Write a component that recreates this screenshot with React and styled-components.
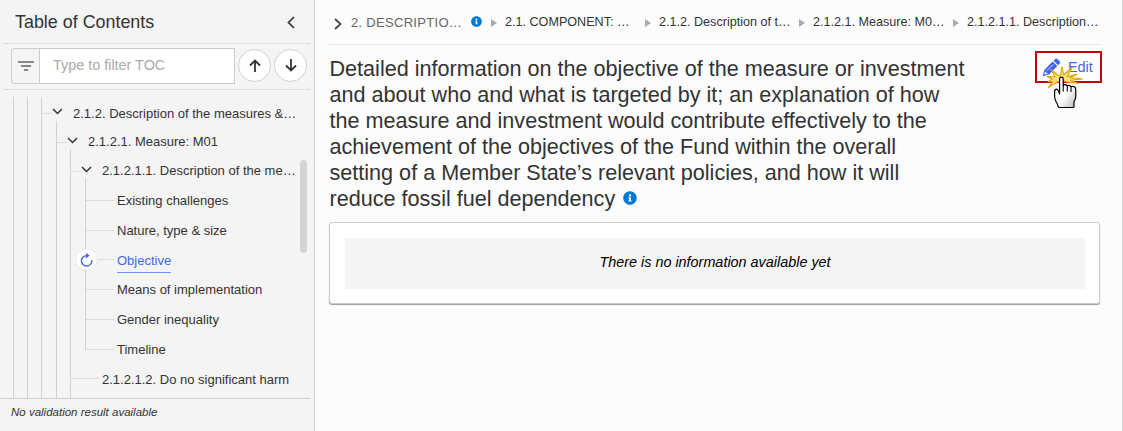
import styled, { createGlobalStyle, css } from "styled-components";
import { FaInfoCircle } from "react-icons/fa";

const branch = [
  { label: "Existing challenges", height: 23 },
  { label: "Nature, type & size", height: 30 },
  { label: "Objective", height: 29, active: true },
  { label: "Means of implementation", height: 30 },
  { label: "Gender inequality", height: 30 },
  { label: "Timeline", height: 30 },
];

const crumbs = [
  "2.1. COMPONENT: …",
  "2.1.2. Description of t…",
  "2.1.2.1. Measure: M0…",
  "2.1.2.1.1. Description…",
];

const titleLines = [
  "Detailed information on the objective of the measure or investment",
  "and about who and what is targeted by it; an explanation of how",
  "the measure and investment would contribute effectively to the",
  "achievement of the objectives of the Fund within the overall",
  "setting of a Member State’s relevant policies, and how it will",
];

function Stroke({ d, w, h, width = 1.7, color = "#333" }) {
  return (
    <svg width={w} height={h} viewBox={`0 0 ${w} ${h}`} fill="none">
      <path d={d} stroke={color} strokeWidth={width} />
    </svg>
  );
}

function FilterIcon() {
  return (
    <svg width="16" height="10" viewBox="0 0 16 10" fill="#888">
      <path d="M0 0h16v2H0zM3 4h10v2H3zM6 8h4v2H6z" />
    </svg>
  );
}

function PencilIcon() {
  return (
    <svg width="19" height="19" viewBox="0 0 19 19">
      <path
        fill="#3f65ee"
        d="M13 1.200q1.300-1.200 2.600 0l2 2q1.200 1.300 0 2.500l-1.500 1.500-4.600-4.500zM10.700 3.500l4.600 4.500-8.300 8.400-6.200 1.900 1.500-6.400z"
      />
      <path
        stroke="#fcfcfc"
        strokeWidth="0.8"
        fill="none"
        d="M4.800 12.800l6.200-6.200"
      />
      <path fill="#fcfcfc" d="M3 13.400l2.700 2.500-2.200.7-1.100-1.100z" />
    </svg>
  );
}

function ClickCursor() {
  return (
    <svg width="44" height="46" viewBox="0 0 44 46">
      <defs>
        <linearGradient id="hand" x1="0" y1="0" x2="1" y2="1">
          <stop offset="0.55" stopColor="#fff" />
          <stop offset="1" stopColor="#b4b4b4" />
        </linearGradient>
      </defs>
      <path
        fill="#ffe07a"
        stroke="#e0a100"
        strokeWidth="1.1"
        strokeLinejoin="round"
        d="M18.500 12.500L20 3.500l1.700 8.500L30.500 4l-5.300 9.500L35 11.200l-7 3.300L40.500 16l-12 1.200 7.500 3-11-1.200-5-1.500-6 2-7.500 5 4-6-4.500.500 4-3L5 13.500l8 .300-4-7 6.500 5z"
      />
      <path
        fill="url(#hand)"
        stroke="#000"
        strokeWidth="1.2"
        strokeLinejoin="round"
        d="M17.600 31V16q0-1.800 1.800-1.800t1.800 1.800v6.500q2-1.700 4 .3 2.300-1.200 3.700.800 4.600-1.300 4.900 3.200v6.500q0 3-1.800 5.500v4.700q0 1-1 1H17.500q-1 0-1.500-1.200-.200-2.300-1.800-4.300-1.600-3-1.600-5.500v-5q0-2.300 2-2.300 1.700.2 3 4.800z"
      />
      <path
        stroke="#000"
        strokeWidth="1.1"
        d="M21.200 22v6.500M25.300 23v5.500M29 24v5"
      />
    </svg>
  );
}

function TreeRow({ label, height, active, open, lift = 0 }) {
  return (
    <Row $height={height}>
      <Connector $width={open ? 10 : 28} />
      {open && (
        <Toggle>
          <Stroke w={11} h={7} d="M1 1l4.500 4.500L10 1" width={1.5} />
        </Toggle>
      )}
      {active && (
        <Refresh>
          <svg width="13" height="14" viewBox="0 0 13 14" fill="none">
            <path
              d="M11.800 7.200A5.200 5.200 0 1 1 6.500 2.600H8M6 .5l2.400 2.100L6 4.800"
              stroke="#4368e6"
              strokeWidth="1.400"
            />
          </svg>
        </Refresh>
      )}
      <Label $active={active} $lift={lift}>
        {label}
      </Label>
    </Row>
  );
}

export default function App() {
  return (
    <Page>
      <GlobalStyle />
      <Sidebar>
        <SideHeader>
          <SideTitle>Table of Contents</SideTitle>
          <Stroke w={8} h={13} d="M7 1L1.500 6.500 7 12" />
        </SideHeader>
        <FilterBar>
          <Addon>
            <FilterIcon />
          </Addon>
          <FilterInput placeholder="Type to filter TOC" />
          <RoundButton>
            <Stroke w={12} h={13} d="M6 13V1.500M1 6.500l5-5 5 5" width={1.8} />
          </RoundButton>
          <RoundButton>
            <Stroke w={12} h={13} d="M6 0v11.500M1 6.500l5 5 5-5" width={1.8} />
          </RoundButton>
        </FilterBar>
        <TreeArea>
          <Group $indent={13}>
            <Group $indent={13}>
              <Group $indent={13}>
                <TreeRow
                  open
                  height={17}
                  label="2.1.2. Description of the measures &…"
                />
                <Group $indent={14} $gap={7}>
                  <TreeRow
                    open
                    height={22}
                    lift={1}
                    label="2.1.2.1. Measure: M01"
                  />
                  <Group $indent={13} $gap={6}>
                    <TreeRow
                      open
                      height={23}
                      lift={1}
                      label="2.1.2.1.1. Description of the me…"
                    />
                    <Group $indent={14} $gap={6} $closed>
                      {branch.map((item) => (
                        <TreeRow key={item.label} {...item} />
                      ))}
                    </Group>
                    <TreeRow
                      height={29}
                      lift={-1}
                      label="2.1.2.1.2. Do no significant harm"
                    />
                  </Group>
                </Group>
              </Group>
            </Group>
          </Group>
          <Thumb />
        </TreeArea>
        <SideFooter>No validation result available</SideFooter>
      </Sidebar>

      <Main>
        <Breadcrumbs>
          <Stroke w={8} h={12} d="M1 1l5.500 5L1 11" color="#444" />
          <FirstCrumb>
            2. DESCRIPTIO…
            <FaInfoCircle size={11} color="#0078d7" />
          </FirstCrumb>
          {crumbs.map((text) => (
            <Crumb key={text}>
              <Triangle />
              {text}
            </Crumb>
          ))}
        </Breadcrumbs>
        <Heading>
          <Title>
            {titleLines.map((line) => (
              <span key={line}>{line}</span>
            ))}
            <span>
              reduce fossil fuel dependency
              <FaInfoCircle size={14} color="#0078d7" />
            </span>
          </Title>
          <EditButton>
            <PencilIcon />
            Edit
            <Pointer>
              <ClickCursor />
            </Pointer>
          </EditButton>
        </Heading>
        <Card>
          <Empty>There is no information available yet</Empty>
        </Card>
      </Main>
    </Page>
  );
}

/* ── styled ── */
const GlobalStyle = createGlobalStyle`
  * {
    box-sizing: border-box;
  }
  body {
    margin: 0;
    font-family: "Liberation Sans", Arial, sans-serif;
    color: #333;
    overflow: hidden;
  }
  svg {
    display: block;
    flex: none;
  }
`;

const Page = styled.div`
  display: flex;
  width: 1123px;
  height: 431px;
  background: #fcfcfc;
`;

const Sidebar = styled.aside`
  display: flex;
  flex-direction: column;
  width: 315px;
  flex: none;
  background: #f4f4f4;
  border-right: 1px solid #d0d0d0;
`;

const dotted = css`
  margin: 0 4px;
  border-bottom: 1px dotted #c8c8c8;
`;

const SideHeader = styled.div`
  ${dotted}
  display: flex;
  align-items: center;
  justify-content: space-between;
  height: 44px;
  padding: 2px 15px 0 11px;
`;

const SideTitle = styled.h2`
  margin: 0;
  padding-bottom: 2px;
  font-size: 17.9px;
  font-weight: 400;
  line-height: 22px;
`;

const FilterBar = styled.div`
  ${dotted}
  display: flex;
  align-items: center;
  height: 46px;
  padding: 0 0 2px 7px;
`;

const Addon = styled.div`
  display: flex;
  align-items: center;
  justify-content: center;
  width: 28px;
  height: 36px;
  border: 1px solid #ccc;
  border-right: 0;
  border-radius: 4px 0 0 4px;
`;

const FilterInput = styled.input`
  width: 196px;
  height: 36px;
  padding: 0 13px 2px;
  border: 1px solid #ccc;
  background: #fff;
  font-family: inherit;
  font-size: 14.4px;
  &::placeholder {
    color: #aaa;
  }
`;

const RoundButton = styled.button`
  display: flex;
  align-items: center;
  justify-content: center;
  width: 33px;
  height: 33px;
  margin-left: 3px;
  padding: 0;
  border: 1px solid #d2d2d2;
  border-radius: 50%;
  background: #fff;
`;

const TreeArea = styled.div`
  display: flex;
  flex: 1;
  min-height: 0;
  width: 310px;
  padding-top: 7px;
  border-bottom: 1px solid #d0d0d0;
`;

const Group = styled.div`
  flex: ${(p) => (p.$closed ? "none" : 1)};
  display: flex;
  flex-direction: column;
  margin-left: ${(p) => p.$indent}px;
  margin-top: ${(p) => p.$gap || 0}px;
  border-left: 1px solid #d0d0d0;
`;

const Row = styled.div`
  position: relative;
  display: flex;
  align-items: flex-end;
  height: ${(p) => p.$height}px;
  white-space: nowrap;
`;

const Connector = styled.div`
  width: ${(p) => p.$width}px;
  height: 1px;
  background: #dcdcdc;
`;

const Toggle = styled.div`
  width: 18px;
  margin-bottom: -1px;
`;

const Label = styled.span`
  margin: 0 0 ${(p) => p.$lift - 9}px 3px;
  font-size: 13px;
  line-height: 18px;
  ${(p) =>
    p.$active &&
    css`
      margin-bottom: -13px;
      padding-bottom: 2px;
      color: #4169e1;
      border-bottom: 1px solid #6f8ff5;
    `}
`;

const Refresh = styled.div`
  position: absolute;
  left: -10px;
  bottom: -10px;
  display: flex;
  align-items: center;
  justify-content: center;
  width: 21px;
  height: 21px;
  border-radius: 50%;
  background: #fff;
  box-shadow: 0 0 1px #bbb;
`;

const Thumb = styled.div`
  width: 7px;
  height: 93px;
  margin: 63px 3px 0 0;
  border-radius: 4px;
  background: #d4d4d4;
`;

const SideFooter = styled.div`
  height: 32px;
  padding-left: 11px;
  font-size: 11.5px;
  font-style: italic;
  line-height: 27px;
`;

const Main = styled.main`
  flex: 1;
  min-width: 0;
  padding: 0 22px 0 14px;
  border-right: 1px solid #d0d0d0;
`;

const Breadcrumbs = styled.nav`
  display: flex;
  align-items: center;
  height: 45px;
  padding-left: 5px;
  border-bottom: 1px solid #e6e6e6;
  font-size: 12.6px;
  white-space: nowrap;
  & > svg {
    margin-top: 4px;
  }
`;

const FirstCrumb = styled.div`
  display: flex;
  align-items: center;
  justify-content: space-between;
  width: 149px;
  flex: none;
  padding: 0 9px 0 9px;
  color: #666;
  font-size: 13px;
  letter-spacing: 0.3px;
  svg {
    margin-top: -2px;
  }
`;

const Crumb = styled.div`
  display: flex;
  align-items: center;
  width: 154px;
  flex: none;
`;

const Triangle = styled.i`
  margin: 1px 8px 0 0;
  border: solid transparent;
  border-width: 4.5px 0 4.5px 6px;
  border-left-color: #aaa;
`;

const Heading = styled.div`
  display: flex;
  justify-content: space-between;
  align-items: flex-start;
  margin-right: -2px;
  padding-top: 6px;
`;

const Title = styled.h1`
  margin: 5px 0 0;
  padding-left: 0.5px;
  font-size: 21.6px;
  font-weight: 400;
  line-height: 25.9px;
  span {
    display: flex;
    align-items: center;
    gap: 8px;
    white-space: nowrap;
  }
`;

const EditButton = styled.div`
  position: relative;
  display: flex;
  align-items: center;
  gap: 7px;
  width: 67px;
  height: 32px;
  padding-left: 5px;
  border: 2px solid #c4000c;
  background: #fff;
  color: #4169e1;
  font-size: 14.4px;
`;

const Pointer = styled.div`
  position: absolute;
  left: 5px;
  top: 10px;
`;

const Card = styled.section`
  height: 82px;
  margin-top: 11px;
  padding: 15px 14px 15px 15px;
  border: 1px solid #ccc;
  border-radius: 3px;
  background: #fff;
  box-shadow: 0 1px 1px #999;
`;

const Empty = styled.p`
  margin: 0;
  height: 51px;
  background: #f4f4f4;
  color: #000;
  font-size: 14.4px;
  font-style: italic;
  line-height: 49px;
  text-align: center;
`;
